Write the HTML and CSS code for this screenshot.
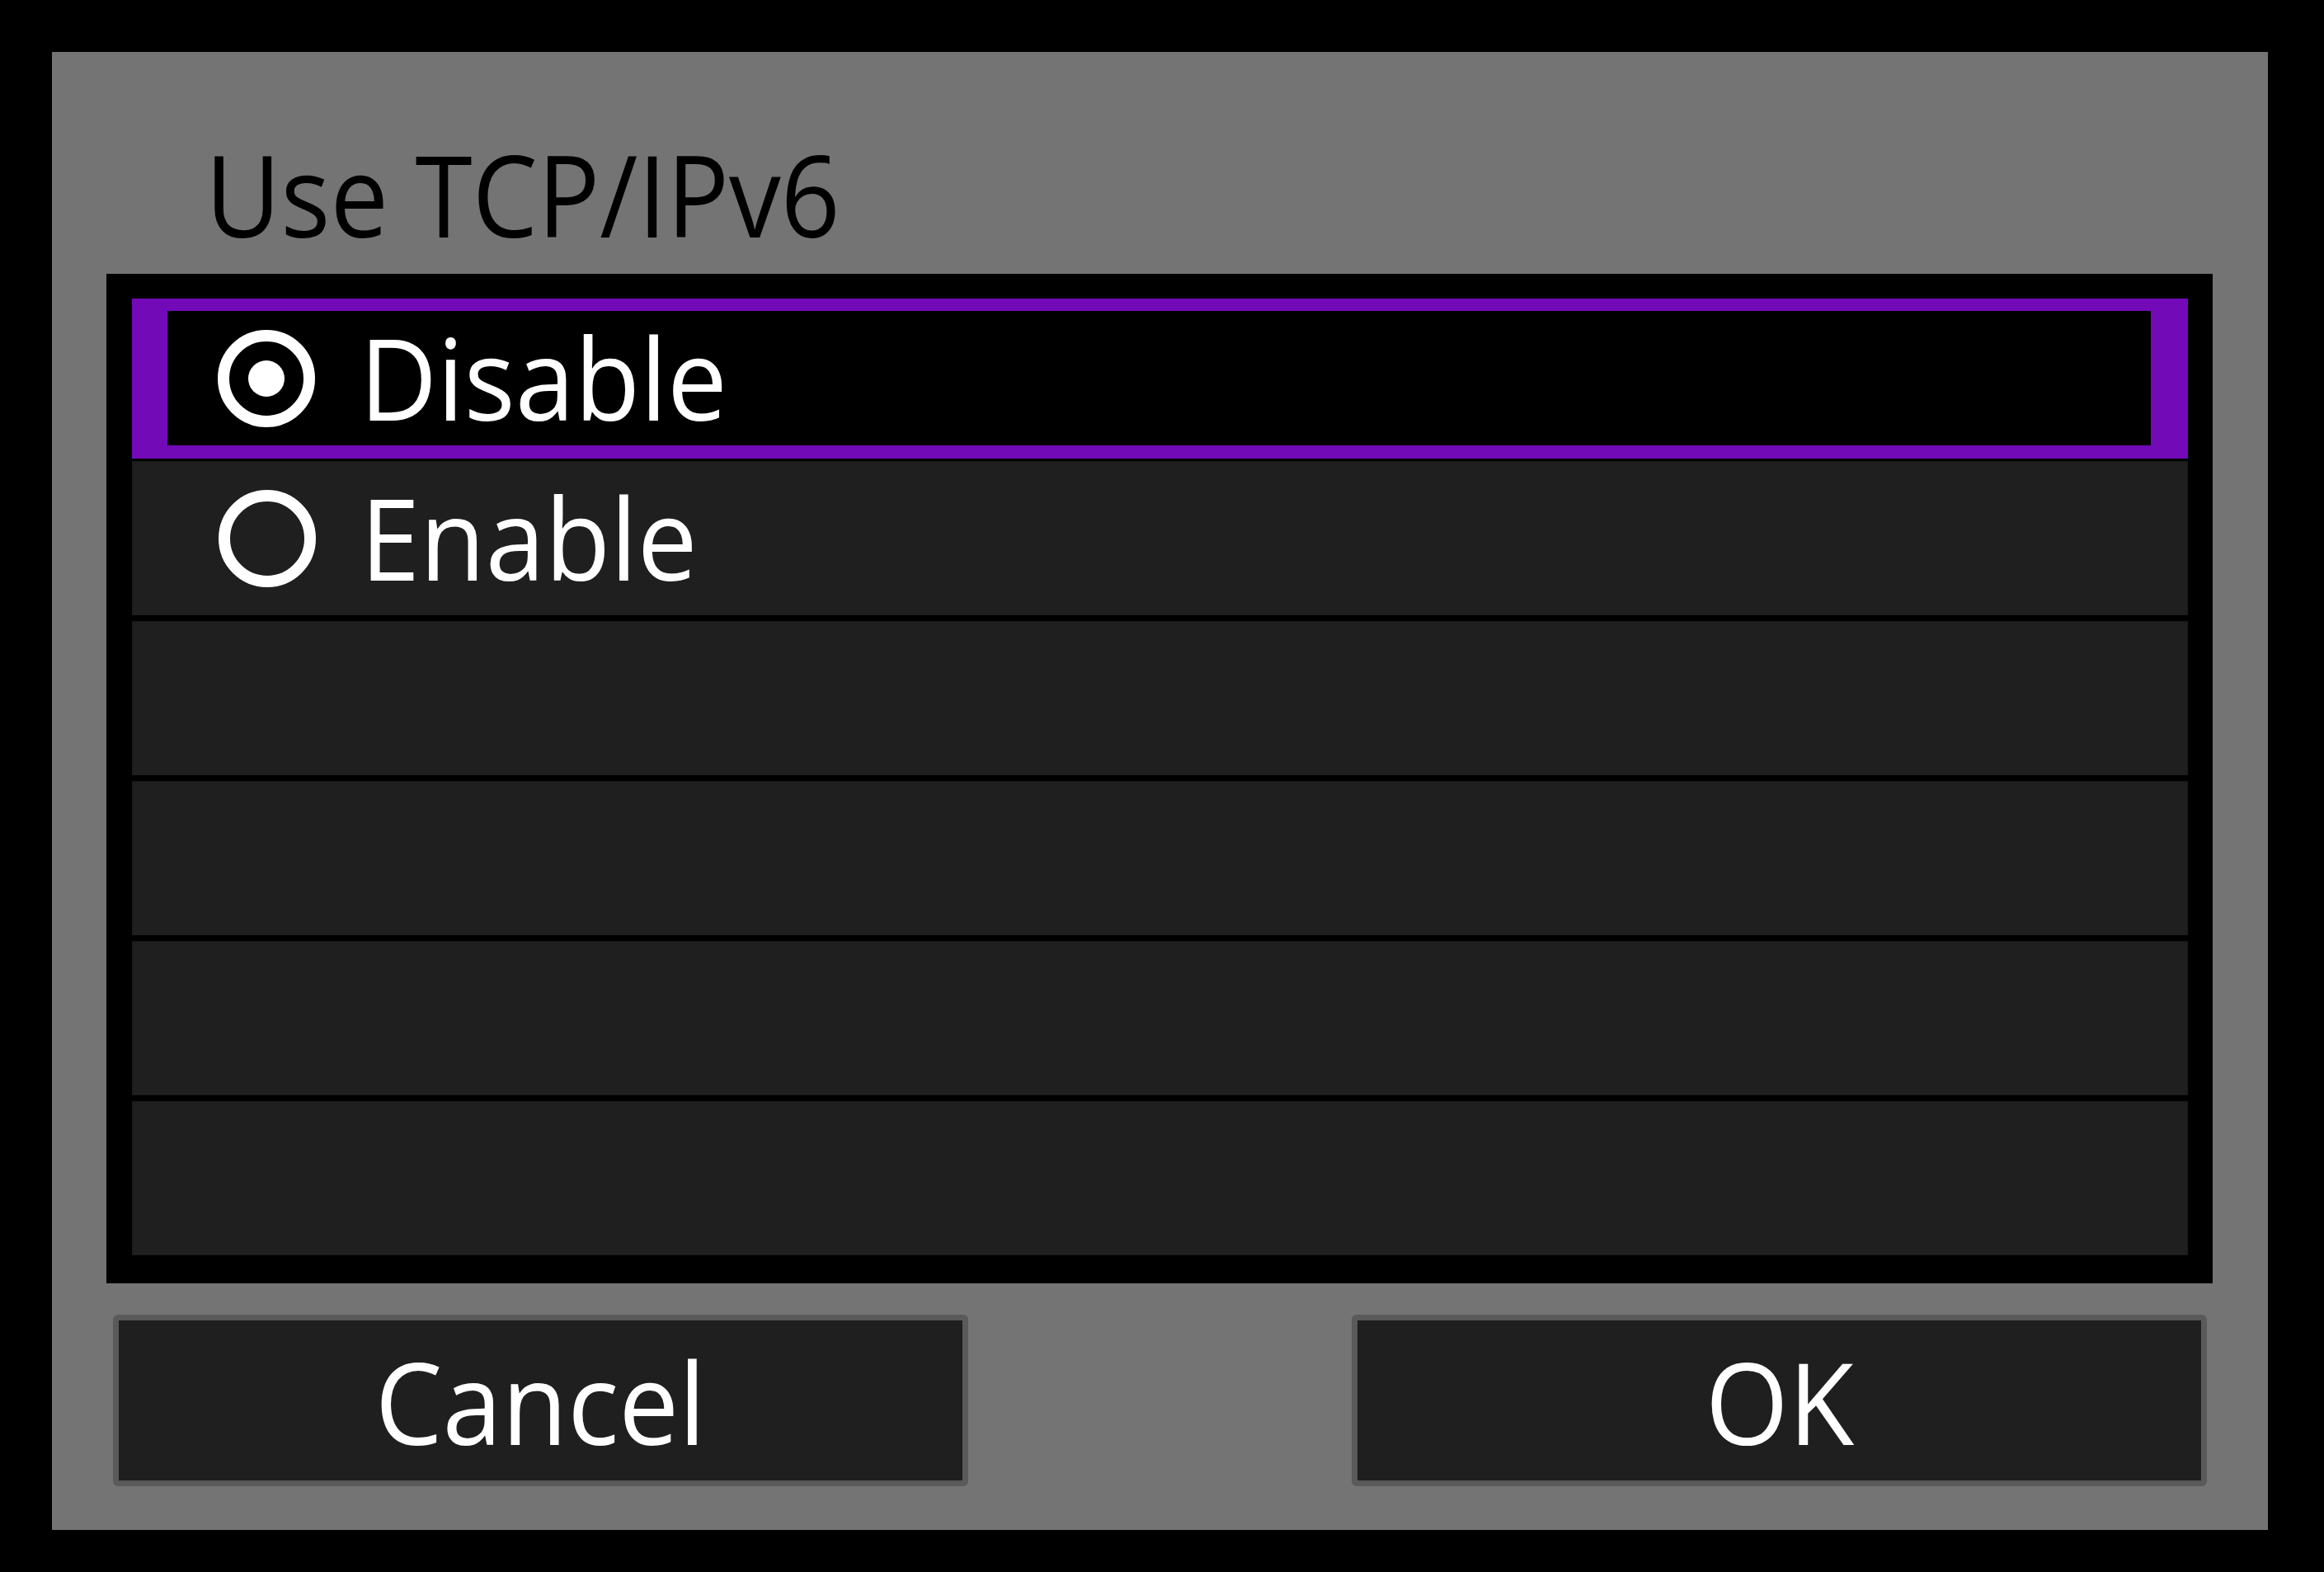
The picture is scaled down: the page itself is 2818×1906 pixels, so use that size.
FILE: index.html
```html
<!DOCTYPE html>
<html lang="en">
<head>
    <meta charset="UTF-8">
    <meta name="viewport" content="width=device-width, initial-scale=1.0">
    <title>Use TCP/IPv6</title>
    <link rel="stylesheet" href="styles.css">
</head>
<body>
    <div class="panel">
        <h1 class="title"><span class="narrow">Use TCP/IPv6</span></h1>
        <div class="list">
            <div class="row selected">
                <svg class="radio" viewBox="0 0 118 118">
                    <circle cx="59" cy="59" r="52" fill="none" stroke="#fff" stroke-width="14"/>
                    <circle cx="59" cy="59" r="22" fill="#fff"/>
                </svg>
                <span class="label">Disable</span>
            </div>
            <div class="row">
                <svg class="radio" viewBox="0 0 118 118">
                    <circle cx="59" cy="59" r="52" fill="none" stroke="#fff" stroke-width="14"/>
                </svg>
                <span class="label">Enable</span>
            </div>
            <div class="row"></div>
            <div class="row"></div>
            <div class="row"></div>
            <div class="row"></div>
        </div>
        <div class="buttons">
            <div class="button"><span class="btn-text">Cancel</span></div>
            <div class="button"><span class="btn-text">OK</span></div>
        </div>
    </div>
</body>
</html>
```

FILE: styles.css
```css
* {
    box-sizing: border-box;
}
body {
    margin: 0;
    padding: 63px;
    background-color: #000;
    font-family: "Open Sans", "Noto Sans", sans-serif;
    font-weight: 400;
}
.panel {
    width: 2687px;
    height: 1792px;
    background-color: #747474;
    display: flex;
    flex-direction: column;
    padding: 0 67px 0 66px;
}
.title {
    margin: 0;
    height: 269px;
    padding: 102px 0 0 120px;
    font-size: 138px;
    font-weight: 400;
    line-height: 138px;
    color: #000;
}
/* the camera font is narrower than Open Sans */
.narrow {
    display: inline-block;
    transform: scaleX(0.91);
    transform-origin: left center;
}
.list {
    background-color: #000;
    display: flex;
    flex-direction: column;
    gap: 7px;
    padding: 30px 30px 34px 31px;
}
.row {
    height: 187px;
    background-color: #1f1f1f;
    border: 1px solid #1a1a1a;
    display: flex;
    align-items: center;
    padding-left: 104px;
    color: #fff;
    font-size: 138px;
    line-height: 1;
}
.row.selected {
    height: 194px;
    margin-bottom: -4px;
    background-color: #000;
    border-style: solid;
    border-color: #720ab8;
    border-width: 15px 45px 16px 43px;
    padding-left: 61px;
}
.radio {
    width: 118px;
    height: 118px;
    flex-shrink: 0;
}
.label {
    display: inline-block;
    margin: 0 0 6px 54px;
    transform: scaleX(0.94);
    transform-origin: left center;
}
.buttons {
    display: flex;
    justify-content: space-between;
    margin: 38px 7px 0 8px;
}
.button {
    width: 1037px;
    height: 208px;
    background-color: #1f1f1f;
    border: 7px solid #5a5a5a;
    border-radius: 6px;
    display: flex;
    align-items: center;
    justify-content: center;
    color: #fff;
    font-size: 138px;
    line-height: 1;
}
.btn-text {
    display: inline-block;
    transform: scaleX(0.94);
}
```
